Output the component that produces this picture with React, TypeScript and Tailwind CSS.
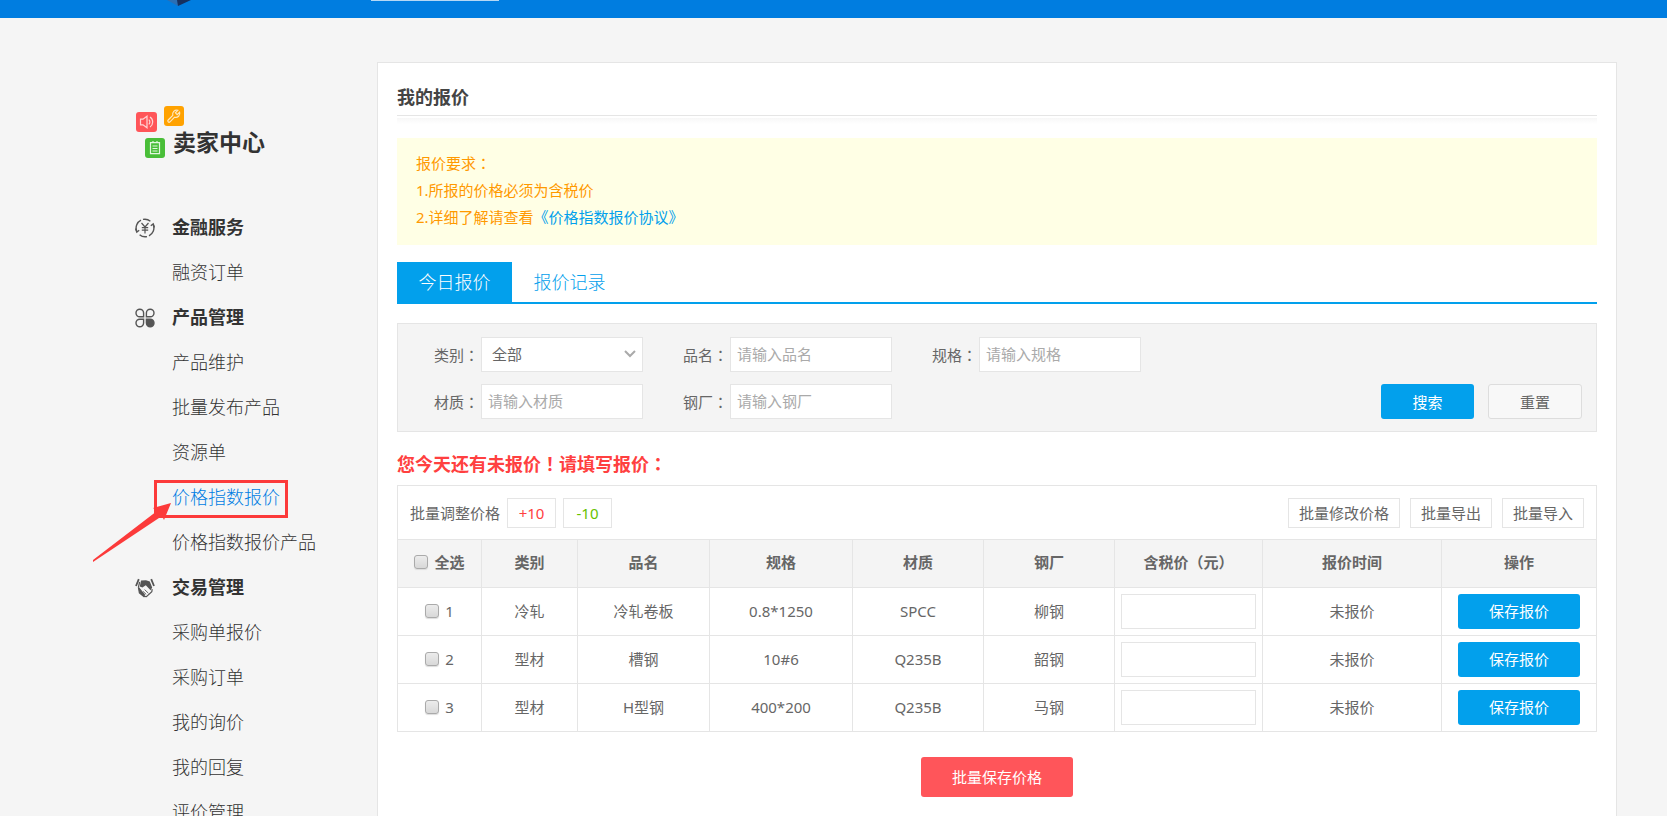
import { useState } from "react";

interface MenuItem {
  label: string;
  icon?: "finance" | "product" | "trade";
  active?: boolean;
}

interface QuoteRow {
  id: number;
  category: string;
  name: string;
  spec: string;
  material: string;
  mill: string;
}

const menu: MenuItem[] = [
  { label: "金融服务", icon: "finance" },
  { label: "融资订单" },
  { label: "产品管理", icon: "product" },
  { label: "产品维护" },
  { label: "批量发布产品" },
  { label: "资源单" },
  { label: "价格指数报价", active: true },
  { label: "价格指数报价产品" },
  { label: "交易管理", icon: "trade" },
  { label: "采购单报价" },
  { label: "采购订单" },
  { label: "我的询价" },
  { label: "我的回复" },
  { label: "评价管理" },
];

const rows: QuoteRow[] = [
  { id: 1, category: "冷轧", name: "冷轧卷板", spec: "0.8*1250", material: "SPCC", mill: "柳钢" },
  { id: 2, category: "型材", name: "槽钢", spec: "10#6", material: "Q235B", mill: "韶钢" },
  { id: 3, category: "型材", name: "H型钢", spec: "400*200", material: "Q235B", mill: "马钢" },
];

const checkboxClass =
  "size-[14px] shrink-0 appearance-none rounded-[3px] border border-[#aaa] bg-linear-to-b from-[#ececec] to-[#d8d8d8] shadow-[0_1px_1px_#ddd] checked:bg-[#02a0ec]";

// Full width punctuation sits in the middle of its box
function Mark({ children }: { children: string }) {
  return <span className="font-['Noto_Sans_CJK_TC',sans-serif]">{children}</span>;
}

function MenuIcon({ type }: { type: MenuItem["icon"] }) {
  if (type === "finance") {
    return (
      <svg viewBox="0 0 20 20" className="size-5" fill="none" stroke="#555" strokeWidth="1.4">
        <path d="M1.6 13A8.8 8.8 0 0 1 6 2.2M8 1.4a8.8 8.8 0 0 1 7.4 1.8" />
        <path d="M18.4 7A8.8 8.8 0 0 1 14 17.8M12 18.6a8.8 8.8 0 0 1-7.4-1.8" />
        <path d="M.6 10.6l1.2 3.4 2.4-1.8M19.4 9.4L18.2 6l-2.4 1.8" />
        <path d="M6.5 5l3.5 4 3.5-4M10 9v6.5M6.8 9.6h6.4M6.8 12.2h6.4" strokeWidth="1.2" />
      </svg>
    );
  }
  if (type === "product") {
    return (
      <svg viewBox="0 0 20 20" className="size-5" fill="none" stroke="#555" strokeWidth="1.4">
        <path d="M4.8 1.2a3.8 3.8 0 1 0 0 7.6h3.8V5a3.8 3.8 0 0 0-3.8-3.8z" />
        <path d="M15.2 1.2a3.8 3.8 0 1 1 0 7.6h-3.8V5a3.8 3.8 0 0 1 3.8-3.8z" />
        <path d="M4.8 18.8a3.8 3.8 0 1 1 0-7.6h3.8V15a3.8 3.8 0 0 1-3.8 3.8z" />
        <path d="M15.2 18.8a3.8 3.8 0 1 0 0-7.6h-3.8V15a3.8 3.8 0 0 0 3.8 3.8z" fill="#555" />
      </svg>
    );
  }
  return (
    <svg viewBox="0 0 20 20" className="size-5" fill="none" stroke="#555" strokeWidth="1.2">
      <path d="M3.8 1.2L1 8M16.2 1.2L19 8" strokeWidth="1.8" />
      <path d="M6 2.6l5-.4 3.8 1.2 2.4 6.2-1.6 2.6-4.8-5-3.4 2.4-2.6-1z" fill="#555" stroke="none" />
      <path d="M4.6 4L3.4 9.4" />
      <path d="M3.4 9.4l6 7.4-.6 1.6-4.4-3.6z" fill="#555" />
      <path d="M9 18.4l2.4.2 5.4-4.8.4-2.6" />
      <path d="M9.6 11.6l3.8 3.6M8 13.4l3.2 3" strokeWidth=".9" />
    </svg>
  );
}

function SellerLogo() {
  return (
    <svg viewBox="0 0 49 52" className="h-[52px] w-[49px]" fill="none" stroke="#fff">
      <rect x="0" y="6" width="21" height="20" rx="3" fill="#ff5559" stroke="none" />
      <g stroke="#ffd5d6" strokeWidth="1.2">
        <path d="M4.5 13.2h2.5l4-3v11.6l-4-3H4.5z" />
        <path d="M12.8 13.6a3.2 3.2 0 0 1 0 4.8M14 11a6 6 0 0 1 0 10" />
      </g>
      <rect x="28" y="0" width="20" height="20" rx="3" fill="#ffa200" stroke="none" />
      <path d="M41.8 4.4a4 4 0 0 0-5 5l-4.6 4.6a1.2 1.2 0 0 0 1.8 1.8l4.6-4.6a4 4 0 0 0 5-5l-2.4 2.4-1.8-1.8z" stroke="#ffe9c0" strokeWidth="1.2" />
      <rect x="9" y="32" width="20" height="20" rx="3" fill="#49be38" stroke="none" />
      <path d="M14.5 36.6h9v11h-9zM16.5 40h5M16.5 42.5h5M16.5 45h5M17 35v2M21 35v2" stroke="#e2f7de" strokeWidth="1.2" />
    </svg>
  );
}

function Field({ id, label }: { id: string; label: string }) {
  return (
    <div className="flex items-center gap-[2px]">
      <label htmlFor={id}>
        {label}
        <Mark>：</Mark>
      </label>
      <input
        id={id}
        type="text"
        placeholder={"请输入" + label}
        className="h-[35px] w-[162px] border border-[#e5e5e5] bg-white px-[6px] pb-[2px] outline-none placeholder:text-[#aaa]"
      />
    </div>
  );
}

function Sidebar() {
  return (
    <aside className="w-[377px] shrink-0 pl-[135px]">
      <div className="flex h-[140px] items-end pl-px">
        <SellerLogo />
        <h2 className="-ml-3 pb-[1px] text-[23px] leading-[30px] font-bold text-[#333]">卖家中心</h2>
      </div>
      <ul className="mt-[47px] text-[18px] leading-[45px] text-[#333]">
        {menu.map((item) => (
          <li key={item.label} className="relative flex items-center">
            <span className="w-[37px] shrink-0">{item.icon && <MenuIcon type={item.icon} />}</span>
            <a
              href="#"
              className={item.icon ? "font-bold" : item.active ? "font-light text-[#007de3]" : "font-light"}
            >
              {item.label}
            </a>
            {item.active && (
              <>
                <span className="absolute top-[5px] left-[19px] h-[38px] w-[134px] border-3 border-[#fc3a3a]" />
                <svg viewBox="0 0 80 60" className="absolute top-7 -left-[43px] h-[60px] w-20" fill="#fc3a3a">
                  <path d="M79 0L61 5l4 3L1 57v2L70 13l2 4z" />
                </svg>
              </>
            )}
          </li>
        ))}
      </ul>
    </aside>
  );
}

function QuoteTable() {
  const [checked, setChecked] = useState<number[]>([]);
  const allChecked = checked.length === rows.length;

  const toggle = (id: number) => {
    setChecked(checked.includes(id) ? checked.filter((c) => c !== id) : [...checked, id]);
  };

  return (
    <table className="w-full table-fixed border-collapse text-center [&_td]:h-12 [&_td]:border [&_td]:border-[#e5e5e5] [&_th]:h-12 [&_th]:border [&_th]:border-[#e5e5e5] [&_th]:pb-[3px]">
      <colgroup>
        <col className="w-[84px]" />
        <col className="w-[96px]" />
        <col className="w-[132px]" />
        <col />
        <col className="w-[131px]" />
        <col className="w-[131px]" />
        <col className="w-[148px]" />
        <col className="w-[179px]" />
        <col className="w-[155px]" />
      </colgroup>
      <thead className="bg-[#f4f4f4]">
        <tr>
          <th>
            <label className="flex items-center justify-center gap-[6px]">
              <input
                type="checkbox"
                className={checkboxClass}
                checked={allChecked}
                onChange={() => setChecked(allChecked ? [] : rows.map((r) => r.id))}
              />
              全选
            </label>
          </th>
          <th>类别</th>
          <th>品名</th>
          <th>规格</th>
          <th>材质</th>
          <th>钢厂</th>
          <th>含税价<Mark>（</Mark>元<Mark>）</Mark></th>
          <th>报价时间</th>
          <th>操作</th>
        </tr>
      </thead>
      <tbody>
        {rows.map((row) => (
          <tr key={row.id}>
            <td className="pb-[2px]">
              <label className="flex items-center justify-center gap-[6px]">
                <input
                  type="checkbox"
                  className={checkboxClass}
                  checked={checked.includes(row.id)}
                  onChange={() => toggle(row.id)}
                />
                {row.id}
              </label>
            </td>
            <td className="pb-[2px]">{row.category}</td>
            <td className="pb-[2px]">{row.name}</td>
            <td className="pb-[2px]">{row.spec}</td>
            <td className="pb-[2px]">{row.material}</td>
            <td className="pb-[2px]">{row.mill}</td>
            <td className="px-[6px]">
              <input
                type="text"
                aria-label="含税价"
                className="block h-[35px] w-full border border-[#e5e5e5] px-2 outline-none"
              />
            </td>
            <td className="pb-[2px]">未报价</td>
            <td className="px-4">
              <button className="block h-[35px] w-full rounded-[3px] bg-[#02a0ec] pb-[2px] text-white">
                保存报价
              </button>
            </td>
          </tr>
        ))}
      </tbody>
    </table>
  );
}

export default function App() {
  return (
    <div className="flex h-screen flex-col overflow-hidden bg-[#f5f5f5] font-['Noto_Sans','Noto_Sans_CJK_SC',sans-serif] text-[15px] leading-6 text-[#666]">
      <header className="flex h-[18px] shrink-0 items-start bg-[#007de0] pl-[167px]">
        <svg viewBox="0 0 24 6" className="h-[6px] w-6">
          <path d="M0 0h11v6z" fill="#2a6fb5" />
          <path d="M10 0h14L11 6z" fill="#16305f" />
        </svg>
        <span className="ml-[180px] h-px w-[128px] bg-[#b5d8f5]" />
      </header>

      <div className="flex items-start pr-[50px]">
        <Sidebar />

        <main className="mt-11 min-w-0 flex-1 border border-[#e5e5e5] bg-white px-[19px] pb-[19px]">
          <h1 className="border-b border-[#e5e5e5] pt-[21px] pb-1 text-[18px] leading-[27px] font-bold text-[#444]">
            我的报价
          </h1>
          <div className="mt-[2px] h-[6px] bg-linear-to-b from-[#f7f7f7] to-white" />

          <div className="mt-[14px] bg-[#ffffe5] px-[19px] pt-[11px] pb-[14px] leading-[27px] text-[#ff9900]">
            <p>报价要求<Mark>：</Mark></p>
            <p>1.所报的价格必须为含税价</p>
            <p>
              2.详细了解请查看<a href="#" className="text-[#02a0ec]">《价格指数报价协议》</a>
            </p>
          </div>

          <nav className="mt-[17px] flex border-b-2 border-[#02a0ec] text-[18px] leading-10 font-light">
            <button className="w-[115px] bg-[#02a0ec] text-white">今日报价</button>
            <button className="w-[115px] text-[#02a0ec]">报价记录</button>
          </nav>

          <form
            className="mt-[19px] flex items-end justify-between border border-[#e5e5e5] bg-[#f4f4f4] pt-[13px] pr-[14px] pb-3 pl-9"
            onSubmit={(e) => e.preventDefault()}
          >
            <div className="grid grid-cols-3 gap-x-10 gap-y-3">
              <div className="flex items-center gap-[2px]">
                <label htmlFor="category">
                  类别<Mark>：</Mark>
                </label>
                <div className="relative">
                  <select
                    id="category"
                    className="block h-[35px] w-[162px] appearance-none border border-[#e5e5e5] bg-white px-[10px] pb-[2px] outline-none"
                  >
                    <option>全部</option>
                  </select>
                  <svg
                    viewBox="0 0 12 8"
                    className="pointer-events-none absolute top-[13px] right-[7px] h-2 w-3"
                    fill="none"
                    stroke="#aaa"
                    strokeWidth="2"
                  >
                    <path d="M1 1l5 5 5-5" />
                  </svg>
                </div>
              </div>
              <Field id="name" label="品名" />
              <Field id="spec" label="规格" />
              <Field id="material" label="材质" />
              <Field id="mill" label="钢厂" />
            </div>
            <div className="flex shrink-0 gap-[14px]">
              <button type="submit" className="h-[35px] w-[93px] rounded-[3px] bg-[#02a0ec] text-white">
                搜索
              </button>
              <button type="reset" className="h-[35px] w-[94px] rounded-[3px] border border-[#ddd] bg-[#f8f8f8]">
                重置
              </button>
            </div>
          </form>

          <p className="mt-[18px] text-[18px] leading-[27px] font-bold text-[#ff4040]">
            您今天还有未报价<Mark>！</Mark>请填写报价<Mark>：</Mark>
          </p>

          <div className="mt-[7px] flex h-[54px] items-center justify-between border border-b-0 border-[#e5e5e5] px-3">
            <div className="flex items-center gap-[7px]">
              <span>批量调整价格</span>
              <button className="h-[30px] w-[49px] border border-[#e5e5e5] leading-[28px] text-[#ff4040]">+10</button>
              <button className="h-[30px] w-[49px] border border-[#e5e5e5] leading-[28px] text-[#66c200]">-10</button>
            </div>
            <div className="flex items-center gap-[10px]">
              <button className="h-[30px] w-[112px] border border-[#e5e5e5] leading-[28px]">批量修改价格</button>
              <button className="h-[30px] w-[82px] border border-[#e5e5e5] leading-[28px]">批量导出</button>
              <button className="h-[30px] w-[82px] border border-[#e5e5e5] leading-[28px]">批量导入</button>
            </div>
          </div>
          <QuoteTable />

          <button className="mx-auto mt-[25px] block h-10 w-[152px] rounded-[3px] bg-[#ff555a] text-white">
            批量保存价格
          </button>
        </main>
      </div>
    </div>
  );
}
